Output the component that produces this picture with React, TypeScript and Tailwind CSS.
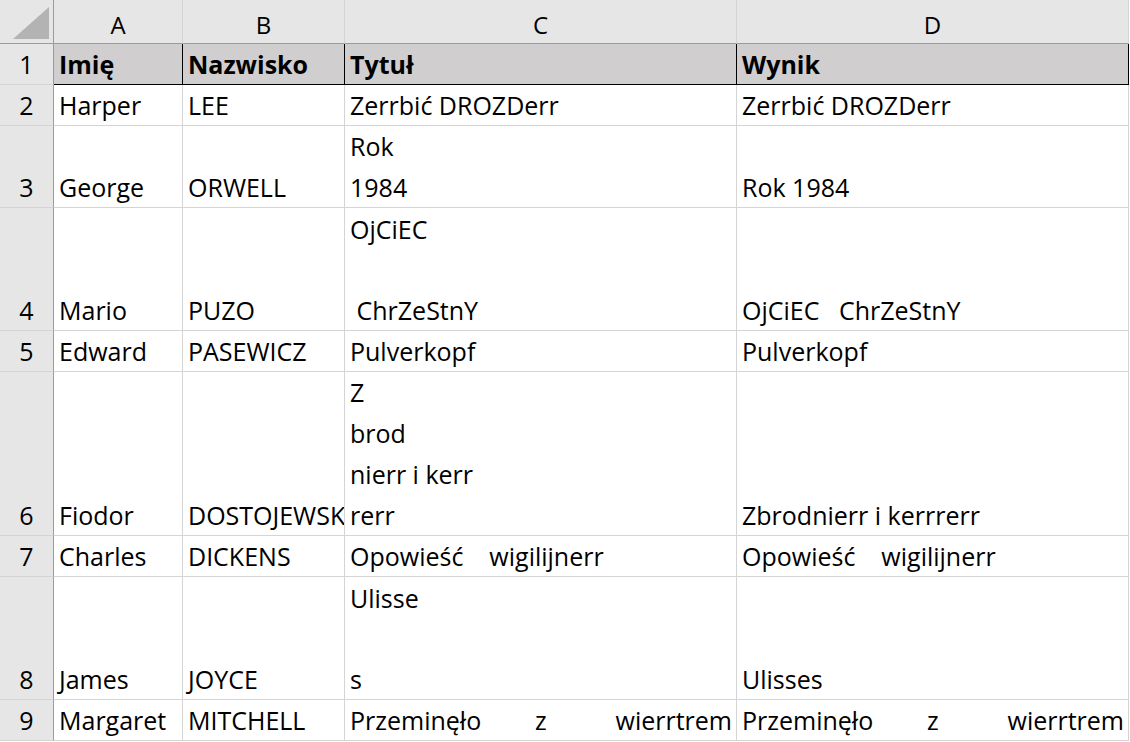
import React from "react";

type Cell = string | string[] | { spread: string[] };

interface RowData {
  n: number;
  h: string;
  cells: Cell[];
  head?: boolean;
}

const rows: RowData[] = [
  { n: 1, h: "h-[41px]", head: true, cells: ["Imię", "Nazwisko", "Tytuł", "Wynik"] },
  { n: 2, h: "h-[41px]", cells: ["Harper", "LEE", "Zerrbić DROZDerr", "Zerrbić DROZDerr"] },
  { n: 3, h: "h-[82px]", cells: ["George", "ORWELL", ["Rok", "1984"], "Rok 1984"] },
  { n: 4, h: "h-[123px]", cells: ["Mario", "PUZO", ["OjCiEC", "", " ChrZeStnY"], "OjCiEC   ChrZeStnY"] },
  { n: 5, h: "h-[41px]", cells: ["Edward", "PASEWICZ", "Pulverkopf", "Pulverkopf"] },
  {
    n: 6,
    h: "h-[164px]",
    cells: ["Fiodor", "DOSTOJEWSKI", ["Z", "brod", "nierr i kerr", "rerr"], "Zbrodnierr i kerrrerr"],
  },
  { n: 7, h: "h-[41px]", cells: ["Charles", "DICKENS", "Opowieść    wigilijnerr", "Opowieść    wigilijnerr"] },
  { n: 8, h: "h-[123px]", cells: ["James", "JOYCE", ["Ulisse", "", "s"], "Ulisses"] },
  {
    n: 9,
    h: "h-[41px]",
    cells: [
      "Margaret",
      "MITCHELL",
      { spread: ["Przeminęło", "z", "wierrtrem"] },
      { spread: ["Przeminęło", "z", "wierrtrem"] },
    ],
  },
];

const CellBody = ({ cell }: { cell: Cell }) => {
  if (typeof cell === "string") {
    return <div className="h-[41px] leading-[43px] whitespace-pre">{cell}</div>;
  }
  if (Array.isArray(cell)) {
    return (
      <>
        {cell.map((line, i) => (
          <div key={i} className="h-[41px] leading-[43px] whitespace-pre">
            {line}
          </div>
        ))}
      </>
    );
  }
  // distributed text: words pushed across the cell like Excel's justify
  return (
    <div className="flex h-[41px] pr-[4px] leading-[43px]">
      <span className="w-[185px] shrink-0">{cell.spread[0]}</span>
      <span>{cell.spread[1]}</span>
      <span className="ml-auto">{cell.spread[2]}</span>
    </div>
  );
};

export default function App() {
  return (
    <div
      className="h-[742px] w-[1130px] overflow-hidden bg-white text-[25px] text-black"
      style={{ fontFamily: '"Open Sans", "Noto Sans", sans-serif' }}
    >
      <div className="grid grid-cols-[54px_129px_162px_392px_392px]">
        {/* column headers */}
        <div className="flex h-[44px] items-end justify-end border-r border-b border-[#9b9b9b] bg-[#e6e6e6] pr-[4px] pb-[4px]">
          <svg width="36" height="32" viewBox="0 0 36 32">
            <polygon points="36,0 36,32 0,32" fill="#b3b3b3" />
          </svg>
        </div>
        {["A", "B", "C", "D"].map((l) => (
          <div
            key={l}
            className="flex h-[44px] items-center justify-center border-r border-b border-r-[#d4d4d4] border-b-[#9b9b9b] bg-[#e6e6e6] pt-[6px] text-[24px]"
          >
            {l}
          </div>
        ))}

        {rows.map((r) => (
          <React.Fragment key={r.n}>
            <div
              className={`${r.h} flex flex-col justify-end border-r border-b border-r-[#9b9b9b] border-b-[#d4d4d4] bg-[#e6e6e6] text-center leading-[43px]`}
            >
              <div className="h-[41px]">{r.n}</div>
            </div>
            {r.cells.map((c, i) => (
              <div
                key={i}
                className={
                  r.head
                    ? `${r.h} flex flex-col justify-end overflow-hidden border-r border-b border-black bg-[#d0cece] pl-[5px] font-bold`
                    : `${r.h} flex flex-col justify-end overflow-hidden border-r border-b border-[#d4d4d4] pl-[5px]`
                }
              >
                <CellBody cell={c} />
              </div>
            ))}
          </React.Fragment>
        ))}
      </div>
    </div>
  );
}
